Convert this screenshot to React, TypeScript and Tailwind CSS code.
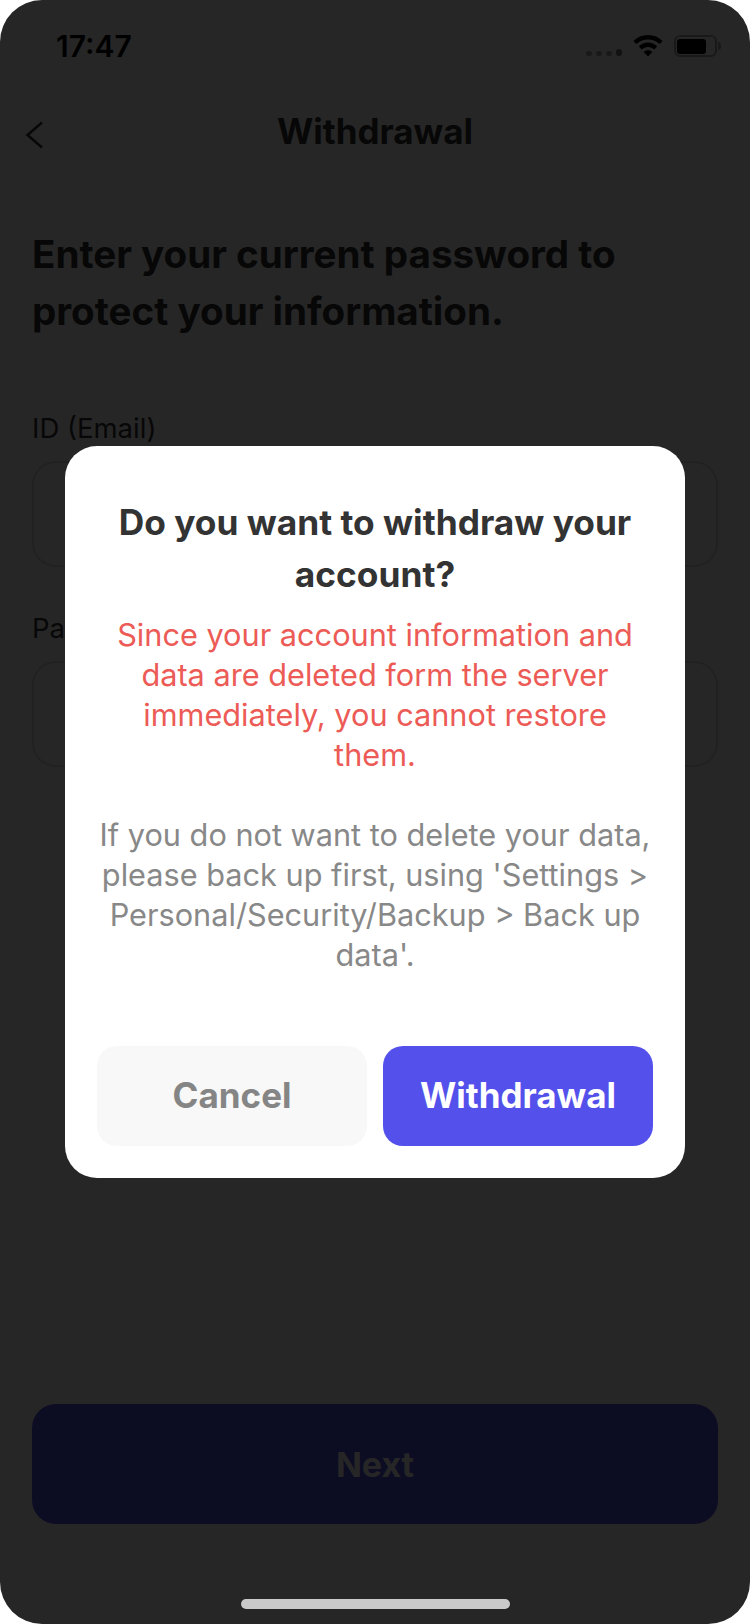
function Wifi() {
  return (
    <svg width="30" height="22" viewBox="0 0 30 22" fill="#000">
      <path d="M15 0C9.2 0 4.2 2.2.4 5.9l3 3.2C6.3 6.2 10.4 4.4 15 4.4s8.7 1.8 11.6 4.7l3-3.2C25.8 2.2 20.8 0 15 0z" />
      <path d="M15 7.6c-3.6 0-6.8 1.4-9.2 3.7l3 3.2c1.6-1.6 3.8-2.5 6.2-2.5s4.6.9 6.2 2.5l3-3.2c-2.4-2.3-5.6-3.7-9.2-3.7z" />
      <path d="M15 15.2c-1.7 0-3.2.7-4.3 1.7L15 21.6l4.3-4.7c-1.1-1-2.6-1.7-4.3-1.7z" />
    </svg>
  )
}

function StatusBar() {
  return (
    <div className="flex h-[92px] items-center justify-between pl-[56px] pr-[29px]">
      <span className="text-[30px] leading-[36px] font-semibold text-black">17:47</span>
      <div className="flex h-[22px] items-center">
        <div className="mb-[1px] mr-[11px] flex items-end gap-[4px] self-end">
          <span className="h-[5px] w-[6px] rounded-full bg-[#aaaaaa]" />
          <span className="h-[5px] w-[6px] rounded-full bg-[#aaaaaa]" />
          <span className="h-[5px] w-[6px] rounded-full bg-[#aaaaaa]" />
          <span className="h-[7px] w-[6px] rounded-full bg-[#777777]" />
        </div>
        <Wifi />
        <div className="ml-[11px] flex items-center">
          <div className="flex h-[22px] w-[43px] items-center rounded-[6px] border-2 border-[#aaaaaa] p-[1px]">
            <div className="h-[15px] w-[29px] rounded-[3px] bg-black" />
          </div>
          <div className="ml-[1px] h-[8px] w-[3px] rounded-r-full bg-[#aaaaaa]" />
        </div>
      </div>
    </div>
  )
}

function Field({ label }: { label: string }) {
  return (
    <div>
      <div className="text-[27.5px] leading-[32px] text-[#333333]">{label}</div>
      <div className="mt-[17px] h-[106px] rounded-[24px] border-2 border-[#dcdcdc] bg-white" />
    </div>
  )
}

export default function App() {
  return (
    <div className="h-[1624px] w-[750px] overflow-hidden bg-white font-['Inter',sans-serif]">
      <div className="relative h-full w-full overflow-hidden rounded-[42px] bg-white">
        <StatusBar />
        <div className="relative flex h-[80px] items-center justify-center">
          <svg className="absolute left-[25px] top-[29px]" width="18" height="28" viewBox="0 0 18 28" fill="none" stroke="#333333" strokeWidth="2.5">
            <path d="M17 1.5 2.5 14 17 26.5" />
          </svg>
          <h1 className="mb-[2px] text-[35px] font-bold text-[#333333]">Withdrawal</h1>
        </div>
        <div className="px-[32px]">
          <p className="mt-[54px] text-[38.6px] leading-[57px] font-bold text-[#333333]">
            Enter your current password to protect your information.
          </p>
          <div className="mt-[72px] flex flex-col gap-[45px]">
            <Field label="ID (Email)" />
            <Field label="Password" />
          </div>
          <button className="mt-[637px] flex h-[120px] w-full items-center justify-center rounded-[24px] bg-[#5350eb] text-[34px] font-bold text-white">
            Next
          </button>
        </div>

        <div className="absolute inset-0 bg-black/85" />

        <div className="absolute left-[65px] top-[446px] w-[620px] rounded-[32px] bg-white px-[32px] pt-[51px] pb-[32px] text-center">
          <h2 className="text-[35.3px] leading-[52px] font-bold text-[#333333]">
            Do you want to withdraw your account?
          </h2>
          <p className="mt-[14px] text-[30.7px] leading-[40px] text-[#ec5b56]">
            Since your account information and data are deleted form the server immediately, you cannot restore<br />them.
          </p>
          <p className="mt-[40px] text-[30.7px] leading-[40px] text-[#888888]">
            If you do not want to delete your data, please back up first, using 'Settings &gt; Personal/Security/Backup &gt; Back up data'.
          </p>
          <div className="mt-[71px] flex gap-[16px]">
            <button className="h-[100px] flex-1 rounded-[20px] bg-[#f8f8f8] pb-[2px] text-[35px] font-bold text-[#858585]">Cancel</button>
            <button className="h-[100px] flex-1 rounded-[20px] bg-[#5350eb] pb-[2px] text-[35px] font-bold text-white">Withdrawal</button>
          </div>
        </div>

        <div className="absolute bottom-[15px] left-[241px] h-[10px] w-[269px] rounded-full bg-[#cacaca]" />
      </div>
    </div>
  )
}
